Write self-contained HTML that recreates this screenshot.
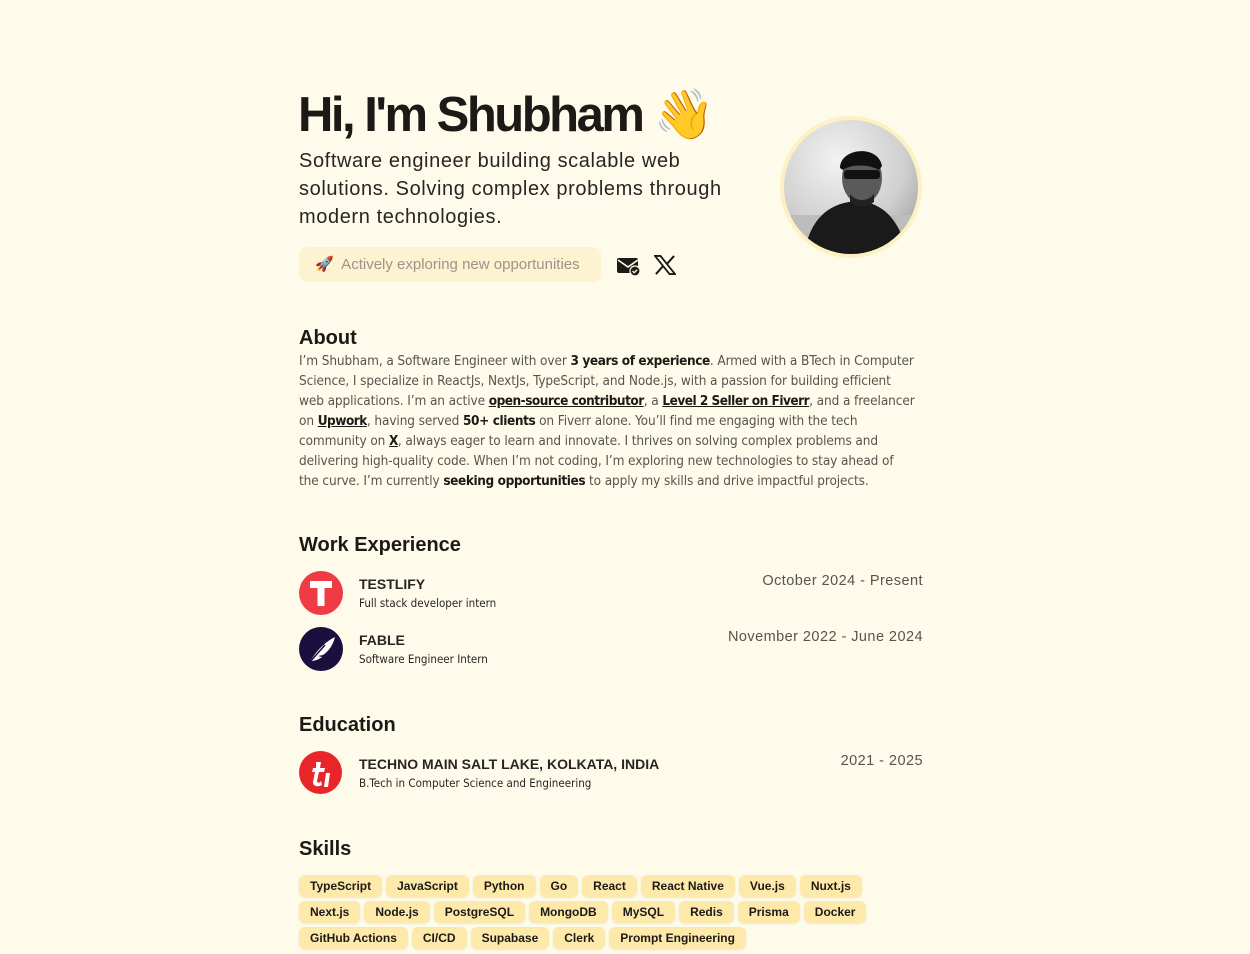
<!DOCTYPE html>
<html><head><meta charset="utf-8">
<style>
*{margin:0;padding:0;box-sizing:border-box}
body{background:#fefbea;width:1250px;height:954px;overflow:hidden;font-family:"Liberation Sans",sans-serif;color:#1c1917}
.wrap{position:absolute;left:299px;top:0;width:624px}
h1{position:absolute;top:86px;left:-1px;font-size:49px;font-weight:700;letter-spacing:-2.5px;line-height:58px;white-space:nowrap}
.sub{position:absolute;top:147px;left:0;width:470px;font-size:20px;letter-spacing:.6px;line-height:28px;color:#292524}
.badge{position:absolute;top:247px;left:0;width:302px;height:35px;background:#fdf3d0;border-radius:8px;font-size:15px;color:#9a958c;line-height:35px;padding-left:16px;white-space:nowrap}
.av{position:absolute;left:481px;top:116px;width:142px;height:142px;border-radius:50%;border:4px solid #fdf0c2;background:radial-gradient(circle at 40% 30%,#f2f2f2,#cfcfcf 55%,#8a8a8a);overflow:hidden}
h2{position:absolute;left:0;font-size:20px;font-weight:700;line-height:24px}
.about{position:absolute;top:351px;left:0;width:700px;white-space:nowrap;font-family:"DejaVu Sans Condensed","DejaVu Sans",sans-serif;font-size:13.5px;line-height:20px;color:#57534e;letter-spacing:-0.1px}
.about b{color:#1c1917;letter-spacing:-0.4px}
.about u{color:#1c1917;font-weight:700;letter-spacing:-0.5px}
.item{position:absolute;left:0;width:624px;height:46px}
.logo{position:absolute;left:0;top:0;width:44px;height:44px;border-radius:50%;overflow:hidden}
.t1{position:absolute;left:60px;top:5px;font-size:14px;font-weight:700;color:#292524}
.t2{position:absolute;left:60px;top:25px;font-family:"DejaVu Sans Condensed","DejaVu Sans",sans-serif;font-size:11.5px;color:#292524}
.dt{position:absolute;right:0;top:2px;font-size:14.5px;color:#57534e;letter-spacing:.45px}
.skills{position:absolute;top:875px;left:0;width:590px;display:flex;flex-wrap:wrap;gap:4px 4px}
.skills span{background:#fde9a9;border-radius:6px;font-size:12px;font-weight:700;height:22px;line-height:22px;padding:0 11px;color:#1c1917;box-shadow:0 1px 2px rgba(0,0,0,.08)}
</style></head><body>
<div class="wrap">
<h1>Hi, I'm Shubham <span style="font-family:'Noto Color Emoji','DejaVu Sans',sans-serif;letter-spacing:0">👋</span></h1>
<div class="sub">Software engineer building scalable web<br>solutions. Solving complex problems through<br>modern technologies.</div>
<div class="badge">🚀&nbsp; Actively exploring new opportunities</div>
<svg style="position:absolute;left:317px;top:256px" width="26" height="20" viewBox="0 0 26 20"><rect x="1" y="2" width="21" height="15" rx="2" fill="#1c1917"/><path d="M2 4l10 7 10-7" stroke="#fefbea" stroke-width="1.6" fill="none"/><circle cx="19" cy="15" r="5" fill="#1c1917" stroke="#fefbea" stroke-width="1.2"/><path d="M16.5 15l1.7 1.7 3-3" stroke="#fefbea" stroke-width="1.3" fill="none"/></svg>
<svg style="position:absolute;left:355px;top:255px" width="22" height="20" viewBox="0 0 24 22"><path d="M1 1h6l16 20h-6z" fill="none" stroke="#1c1917" stroke-width="2"/><path d="M22 1L14 10M2 21l8-9" stroke="#1c1917" stroke-width="2.2"/></svg>
<div class="av"><svg width="134" height="134" viewBox="0 0 134 134"><rect y="95" width="134" height="40" fill="#bdbdbd"/><path d="M20 134c5-30 20-48 45-52s50 10 58 52z" fill="#1a1a1a"/><ellipse cx="78" cy="58" rx="20" ry="26" fill="#5a5a5a"/><path d="M56 48c0-20 38-24 42-2l-3 4c-10-6-28-6-36 0z" fill="#111"/><rect x="60" y="50" width="36" height="9" rx="3" fill="#111"/><path d="M66 74c6 8 18 8 24 0v8c-8 6-18 6-24 0z" fill="#222"/></svg></div>

<h2 style="top:326px">About</h2>
<div class="about">I’m Shubham, a Software Engineer with over <b>3 years of experience</b>. Armed with a BTech in Computer<br>Science, I specialize in ReactJs, NextJs, TypeScript, and Node.js, with a passion for building efficient<br>web applications. I’m an active <u>open-source contributor</u>, a <u>Level 2 Seller on Fiverr</u>, and a freelancer<br>on <u>Upwork</u>, having served <b>50+ clients</b> on Fiverr alone. You’ll find me engaging with the tech<br>community on <u>X</u>, always eager to learn and innovate. I thrives on solving complex problems and<br>delivering high-quality code. When I’m not coding, I’m exploring new technologies to stay ahead of<br>the curve. I’m currently <b>seeking opportunities</b> to apply my skills and drive impactful projects.</div>

<h2 style="top:533px">Work Experience</h2>
<div class="item" style="top:571px">
<div class="logo" style="background:#ef3b45"><svg width="44" height="44"><path d="M11 10h22v7h-7.5v18h-7V17H11z" fill="#fff"/></svg></div>
<div class="t1">TESTLIFY</div><div class="t2">Full stack developer intern</div><div class="dt">October 2024 - Present</div></div>
<div class="item" style="top:627px">
<div class="logo" style="background:#1b0f3d"><svg width="44" height="44"><path d="M10 36c6-10 14-20 26-26-2 8-6 14-12 18l-5 1 4 1c-4 3-8 4-11 4z" fill="#fff"/><path d="M10 36l16-18" stroke="#1b0f3d" stroke-width="1.5"/></svg></div>
<div class="t1">FABLE</div><div class="t2">Software Engineer Intern</div><div class="dt">November 2022 - June 2024</div></div>

<h2 style="top:713px">Education</h2>
<div class="item" style="top:751px">
<div class="logo" style="background:#e8262a;width:43px;height:43px"><svg width="44" height="44"><path d="M17 11h5l-1 6h5l-1 4h-5l-2 9c0 2 2 2 3 1l1-1 1 4c-3 2-9 2-9-3l2-10h-3l1-4h3zM27 22h4l-2 14h-4z" fill="#fff"/></svg></div>
<div class="t1">TECHNO MAIN SALT LAKE, KOLKATA, INDIA</div><div class="t2">B.Tech in Computer Science and Engineering</div><div class="dt">2021 - 2025</div></div>

<h2 style="top:837px">Skills</h2>
<div class="skills">
<span>TypeScript</span><span>JavaScript</span><span>Python</span><span>Go</span><span>React</span><span>React Native</span><span>Vue.js</span><span>Nuxt.js</span>
<span>Next.js</span><span>Node.js</span><span>PostgreSQL</span><span>MongoDB</span><span>MySQL</span><span>Redis</span><span>Prisma</span><span>Docker</span>
<span>GitHub Actions</span><span>CI/CD</span><span>Supabase</span><span>Clerk</span><span>Prompt Engineering</span>
</div>
</div>
</body></html>
